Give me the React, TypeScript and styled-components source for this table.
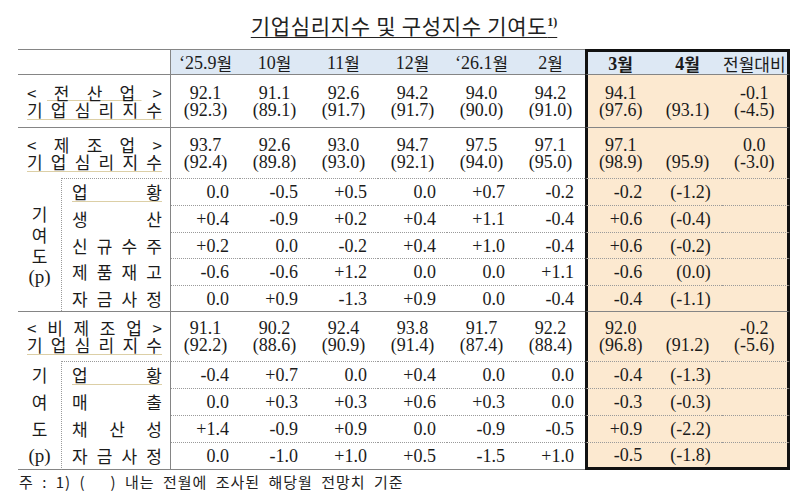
import React from 'react';
import styled, { createGlobalStyle } from 'styled-components';

const Global = createGlobalStyle`
  html, body { margin: 0; padding: 0; background: #fff; }
  body { width: 800px; height: 493px; overflow: hidden; }
`;

type Line = 'solid' | 'dotted' | 'none' | 'frame';
const GRAY = '#858585';
const DOT = '#9a9a9a';
const BEIGE = '#dccfa6';
const PEACH = '#fce9d0';
const BLUE = '#dde8f4';
const KR = '"Noto Sans CJK KR", sans-serif';
const SERIF = '"Liberation Serif", "Noto Sans CJK KR", serif';

const line = (l?: Line) =>
  l === 'solid'
    ? `1px solid ${GRAY}`
    : l === 'dotted'
    ? `1px dotted ${DOT}`
    : l === 'frame'
    ? '3px solid #111'
    : 'none';

const Page = styled.div`
  width: 800px;
  height: 493px;
  box-sizing: border-box;
  padding: 13px 10px 0 18px;
  font-family: ${SERIF};
  color: #1b1b1b;
`;

const Title = styled.h1`
  margin: 0;
  width: 772px;
  height: 36px;
  text-align: center;
  font-family: ${KR};
  font-weight: 400;
  font-size: 21px;
  line-height: 24px;
  letter-spacing: 0.7px;
  color: #222;
`;

const TitleText = styled.span`
  text-decoration: underline;
  text-decoration-thickness: 1px;
  text-underline-offset: 3px;
`;

const Sup = styled.sup`
  font-family: "Liberation Serif", serif;
  font-size: 12px;
  font-weight: 700;
  vertical-align: 8px;
  line-height: 0;
  letter-spacing: 0;
`;

const Grid = styled.div`
  display: grid;
  width: 773px;
  grid-template-columns: 44px 109px repeat(6, 69px) repeat(3, 68.33px);
  grid-template-rows: 25px 53px 51px 27px 27px 26px 27px 26px 50px 27px 27px 27px 28px;
`;

type CellProps = {
  $top?: Line;
  $bottom?: Line;
  $left?: Line;
  $right?: Line;
  $hl?: boolean;
};

const Cell = styled.div<CellProps>`
  box-sizing: border-box;
  min-width: 0;
  border-top: ${(p) => line(p.$top)};
  border-bottom: ${(p) => line(p.$bottom)};
  border-left: ${(p) => line(p.$left)};
  border-right: ${(p) => line(p.$right)};
  background: ${(p) => (p.$hl ? PEACH : 'transparent')};
  font-size: 18px;
`;

const CornerCell = styled(Cell)`
  grid-column: span 2;
`;

const HeadCell = styled(Cell)<{ $bold?: boolean }>`
  background: ${BLUE};
  display: flex;
  align-items: center;
  justify-content: center;
  font-weight: ${(p) => (p.$bold ? 700 : 400)};
  line-height: 18px;
  padding-top: 1px;
`;

const HeadKr = styled.span`
  font-family: ${KR};
  font-size: 17px;
`;

const MainLabel = styled(Cell)`
  grid-column: span 2;
  display: flex;
  flex-direction: column;
  justify-content: center;
  padding: 1px 8px 0 9px;
  font-family: ${KR};
  font-size: 17px;
`;

const Spread = styled.div<{ $under?: 'full' | 'mid' }>`
  display: flex;
  justify-content: space-between;
  line-height: 17px;
  padding-bottom: ${(p) => (p.$under === 'full' ? '2px' : '0')};
  background-image: ${(p) =>
    p.$under ? `linear-gradient(${BEIGE}, ${BEIGE})` : 'none'};
  background-repeat: no-repeat;
  background-position: center bottom;
  background-size: ${(p) => (p.$under === 'mid' ? '70% 1px' : '100% 1px')};
`;

const MainValue = styled(Cell)`
  display: flex;
  flex-direction: column;
  justify-content: center;
  align-items: center;
  line-height: 17px;
  padding-top: 1px;
`;

const SubValue = styled(Cell)`
  display: flex;
  align-items: center;
  justify-content: flex-end;
  padding-right: 11px;
  line-height: 18px;
`;

const Group = styled(Cell)<{ $span: number; $pitch: number }>`
  grid-row: span ${(p) => p.$span};
  display: flex;
  flex-direction: column;
  align-items: center;
  justify-content: center;
  font-family: ${KR};
  font-size: 17px;
  line-height: ${(p) => p.$pitch}px;
`;

const GroupP = styled.span`
  font-family: "Liberation Serif", serif;
  font-size: 19px;
`;

const Item = styled(Cell)`
  display: flex;
  flex-direction: column;
  justify-content: center;
  padding: 0 8px 0 10px;
  font-family: ${KR};
  font-size: 17px;
`;

const Note = styled.div`
  padding: 2px 0 0 1px;
  font-family: ${KR};
  font-size: 15px;
  line-height: 19px;
  letter-spacing: 1px;
  word-spacing: 4px;
  color: #222;
  white-space: pre;
`;

const headers = ['‘25.9월', '10월', '11월', '12월', '‘26.1월', '2월', '3월', '4월', '전월대비'];

type Main = { name: string[]; under: 'mid' | undefined; top: string[]; paren: string[] };
type Sub = { name: string[]; v: string[] };
type Section = { main: Main; subs?: Sub[]; pitch?: number };

const sections: Section[] = [
  {
    main: {
      name: ['<', '전', '산', '업', '>'],
      under: 'mid',
      top: ['92.1', '91.1', '92.6', '94.2', '94.0', '94.2', '94.1', '', '-0.1'],
      paren: ['(92.3)', '(89.1)', '(91.7)', '(91.7)', '(90.0)', '(91.0)', '(97.6)', '(93.1)', '(-4.5)'],
    },
  },
  {
    main: {
      name: ['<', '제', '조', '업', '>'],
      under: undefined,
      top: ['93.7', '92.6', '93.0', '94.7', '97.5', '97.1', '97.1', '', '0.0'],
      paren: ['(92.4)', '(89.8)', '(93.0)', '(92.1)', '(94.0)', '(95.0)', '(98.9)', '(95.9)', '(-3.0)'],
    },
    pitch: 21,
    subs: [
      { name: ['업', '황'], v: ['0.0', '-0.5', '+0.5', '0.0', '+0.7', '-0.2', '-0.2', '(-1.2)', ''] },
      { name: ['생', '산'], v: ['+0.4', '-0.9', '+0.2', '+0.4', '+1.1', '-0.4', '+0.6', '(-0.4)', ''] },
      { name: ['신', '규', '수', '주'], v: ['+0.2', '0.0', '-0.2', '+0.4', '+1.0', '-0.4', '+0.6', '(-0.2)', ''] },
      { name: ['제', '품', '재', '고'], v: ['-0.6', '-0.6', '+1.2', '0.0', '0.0', '+1.1', '-0.6', '(0.0)', ''] },
      { name: ['자', '금', '사', '정'], v: ['0.0', '+0.9', '-1.3', '+0.9', '0.0', '-0.4', '-0.4', '(-1.1)', ''] },
    ],
  },
  {
    main: {
      name: ['<', '비', '제', '조', '업', '>'],
      under: undefined,
      top: ['91.1', '90.2', '92.4', '93.8', '91.7', '92.2', '92.0', '', '-0.2'],
      paren: ['(92.2)', '(88.6)', '(90.9)', '(91.4)', '(87.4)', '(88.4)', '(96.8)', '(91.2)', '(-5.6)'],
    },
    pitch: 27,
    subs: [
      { name: ['업', '황'], v: ['-0.4', '+0.7', '0.0', '+0.4', '0.0', '0.0', '-0.4', '(-1.3)', ''] },
      { name: ['매', '출'], v: ['0.0', '+0.3', '+0.3', '+0.6', '+0.3', '0.0', '-0.3', '(-0.3)', ''] },
      { name: ['채', '산', '성'], v: ['+1.4', '-0.9', '+0.9', '0.0', '-0.9', '-0.5', '+0.9', '(-2.2)', ''] },
      { name: ['자', '금', '사', '정'], v: ['0.0', '-1.0', '+1.0', '+0.5', '-1.5', '+1.0', '-0.5', '(-1.8)', ''] },
    ],
  },
];

const chars = (list: string[]) => list.map((c, i) => <span key={i}>{c}</span>);

// side borders for the framed last three columns
const sides = (i: number): { $left?: Line; $right?: Line } =>
  i === 6 ? { $left: 'frame' } : i === 8 ? { $right: 'frame' } : {};

export default function App() {
  const cells: React.ReactNode[] = [];
  cells.push(<CornerCell key="corner" $top="solid" $right="solid" />);
  headers.forEach((h, i) => {
    const m = h.match(/^(.*?)(월|전월대비)$/);
    const num = m ? m[1] : h;
    const kr = m ? m[2] : '';
    cells.push(
      <HeadCell
        key={`h${i}`}
        $top={i >= 6 ? 'frame' : 'solid'}
        $bold={i === 6 || i === 7}
        {...sides(i)}
      >
        {num}
        <HeadKr>{kr}</HeadKr>
      </HeadCell>
    );
  });

  sections.forEach((s, si) => {
    const lastSection = si === sections.length - 1;
    cells.push(
      <MainLabel key={`ml${si}`} $top="solid" $right="solid">
        <Spread $under={s.main.under}>{chars(s.main.name)}</Spread>
        <Spread $under="full">{chars(['기', '업', '심', '리', '지', '수'])}</Spread>
      </MainLabel>
    );
    s.main.top.forEach((t, i) => {
      cells.push(
        <MainValue key={`mv${si}-${i}`} $top="solid" $hl={i >= 6} {...sides(i)}>
          <span>{t || '\u00a0'}</span>
          <span>{s.main.paren[i]}</span>
        </MainValue>
      );
    });
    if (s.subs) {
      const n = s.subs.length;
      cells.push(
        <Group
          key={`g${si}`}
          $span={n}
          $pitch={s.pitch ?? 21}
          $right="dotted"
          $bottom={lastSection ? 'solid' : 'none'}
        >
          <span>기</span>
          <span>여</span>
          <span>도</span>
          <GroupP>(p)</GroupP>
        </Group>
      );
      s.subs.forEach((sub, ri) => {
        const last = lastSection && ri === n - 1;
        cells.push(
          <Item
            key={`it${si}-${ri}`}
            $top={ri === 0 ? 'dotted' : 'none'}
            $bottom={last ? 'solid' : 'none'}
            $right="solid"
          >
            <Spread $under={ri === 0 ? 'full' : undefined}>{chars(sub.name)}</Spread>
          </Item>
        );
        sub.v.forEach((v, i) => {
          cells.push(
            <SubValue
              key={`sv${si}-${ri}-${i}`}
              $top="dotted"
              $bottom={last ? (i >= 6 ? 'frame' : 'solid') : 'none'}
              $hl={i >= 6}
              {...sides(i)}
            >
              {v}
            </SubValue>
          );
        });
      });
    }
  });

  return (
    <>
      <Global />
      <Page>
        <Title>
          <TitleText>
            기업심리지수 및 구성지수 기여도<Sup>1)</Sup>
          </TitleText>
        </Title>
        <Grid>{cells}</Grid>
        <Note>{'주 : 1) (   ) 내는 전월에 조사된 해당월 전망치 기준'}</Note>
      </Page>
    </>
  );
}
